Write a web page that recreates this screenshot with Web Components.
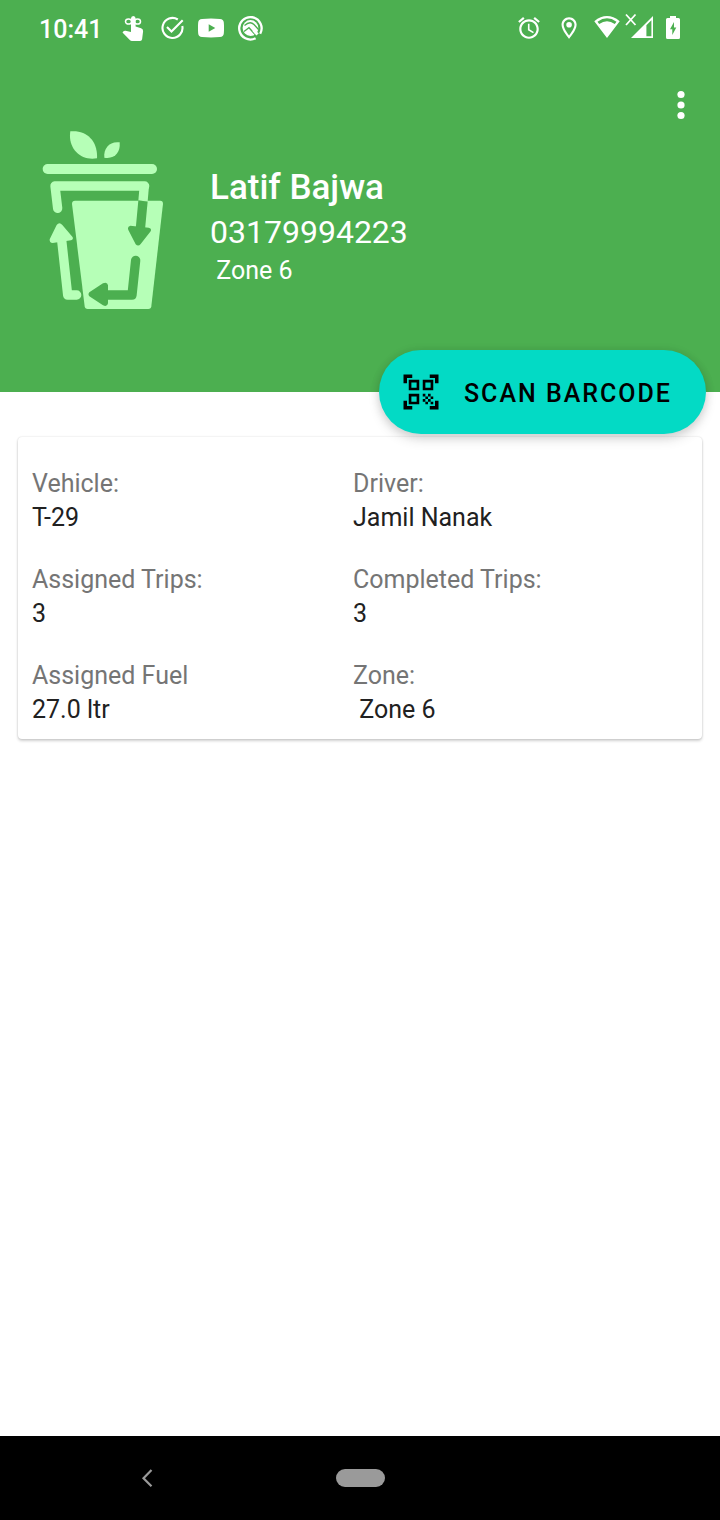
<!DOCTYPE html>
<html lang="en">
<head>
<meta charset="utf-8">
<meta name="viewport" content="width=device-width, initial-scale=1">
<title>Trips</title>
<style>
  body { margin: 0; font-family: Roboto, "Noto Sans", sans-serif; font-size: 25px; }
</style>
</head>
<body>
<driver-app></driver-app>
<script>
const define = (name, html) => {
  const template = document.createElement('template');
  template.innerHTML = html;
  customElements.define(name, class extends HTMLElement {
    constructor() {
      super();
      this.attachShadow({ mode: 'open' }).append(template.content.cloneNode(true));
    }
  });
};

define('status-bar', `
<style>
  :host { display: flex; justify-content: space-between; align-items: center; height: 56px; padding: 0 40px 0 39px; box-sizing: border-box; color: #fff; }
  .group { display: flex; align-items: center; }
  .left { gap: 14px; }
  .right { gap: 12px; }
  time { font-weight: 500; line-height: 30px; width: 68px; padding-top: 4px; }
  svg { display: block; fill: currentColor; }
</style>
<div class="group left">
  <time>10:41</time>
  <svg width="26" height="28" viewBox="0 0 26 28" aria-hidden="true">
    <path d="M10 4.500q0-2.500 2.300-2.500t2.300 2.500v8l5.500 1.800q2.300.8 2 3l-1 8q-.3 1.700-2 1.700H11q-1.300 0-2.200-1L1.500 18.500l1-1.200q.8-.9 2-.6l5.500 1.200z"/>
    <g fill="none" stroke="currentColor" stroke-width="1.500"><ellipse cx="7.500" cy="7.500" rx="3" ry="2.600"/><ellipse cx="16.500" cy="7.500" rx="3" ry="2.600"/></g>
  </svg>
  <svg width="23" height="28" viewBox="0 0 23 28" aria-hidden="true">
    <g fill="none" stroke="currentColor" stroke-width="2.100"><path d="M16.800 5.500A10 10 0 1 0 21.300 12"/><path d="M6 13l4.500 4.600L21.700 6.300"/></g>
  </svg>
  <svg width="26" height="28" viewBox="0 0 26 28" aria-hidden="true">
    <path fill-rule="evenodd" d="M4 5q9-.8 18 0 3.500.2 3.800 3.500.5 5.500 0 11-.3 3.300-3.800 3.500-9 .8-18 0-3.500-.2-3.800-3.500-.5-5.500 0-11Q.5 5.200 4 5zm6.700 5.200v7.600l6.600-3.800z"/>
  </svg>
  <svg width="25" height="28" viewBox="0 0 25 28" aria-hidden="true">
    <path fill="none" stroke="currentColor" stroke-width="2.300" d="M17.600 24.200A11.200 11.200 0 1 1 22.200 19.700"/>
    <circle cx="12.500" cy="14" r="7.900"/>
    <g fill="none" stroke="#4caf50" stroke-width="1.300"><path d="M6.500 11.500q5.500-5 9.500-1l4.500 5"/><path d="M6 17.500l5-3.800 6.500 7.300"/></g>
    <path d="M15.500 16l4 4.600" stroke="currentColor" stroke-width="3"/>
  </svg>
</div>
<div class="group right">
  <svg width="26" height="26" viewBox="0 0 24 24" aria-hidden="true"><path d="M22 5.720l-4.600-3.860-1.290 1.530 4.600 3.860L22 5.720zM7.880 3.390L6.600 1.860 2 5.710l1.290 1.530 4.590-3.850zM12.500 8H11v6l4.750 2.850.75-1.230-4-2.370V8zM12 4c-4.970 0-9 4.030-9 9s4.020 9 9 9c4.970 0 9-4.030 9-9s-4.030-9-9-9zm0 16c-3.870 0-7-3.130-7-7s3.130-7 7-7 7 3.130 7 7-3.130 7-7 7z"/></svg>
  <svg width="28" height="26" viewBox="-2 0 26 24" aria-hidden="true"><path d="M12 2C8.130 2 5 5.130 5 9c0 5.250 7 13 7 13s7-7.750 7-13c0-3.870-3.130-7-7-7zM7 9c0-2.760 2.240-5 5-5s5 2.240 5 5c0 2.880-2.880 7.190-5 9.880C9.920 16.210 7 11.850 7 9z"/><circle cx="12" cy="9" r="2.600"/></svg>
  <svg width="60" height="30" viewBox="0 0 60 30" aria-hidden="true">
    <path fill-rule="evenodd" d="M.3 8.200Q13-2 25.700 8.200L13 25zM3.500 8.700l1.700 2.300q7.800-5.600 15.600 0l1.700-2.300q-9.500-6.800-19 0z"/>
    <path d="M32 1.500l9.500 10.500m0-10.500l-9.500 10.500" stroke="currentColor" stroke-width="1.800"/>
    <path fill-rule="evenodd" d="M59 3v22H37zM57.400 7.200l-5 5v11h5z"/>
  </svg>
  <svg width="14" height="26" viewBox="0 0 14 26" aria-hidden="true"><path fill-rule="evenodd" d="M4 2V1h6v2h2.500q1.500 0 1.500 1.500v18q0 1.500-1.500 1.500h-11Q0 24 0 22.500v-18Q0 3 1.500 3H4zM8 7l-4 7.200h2.300V20l4-7.500H8z"/></svg>
</div>`);

define('bin-logo', `
<style>
  :host { display: block; color: #b6ffb7; --cut: #4caf50; }
  svg { display: block; fill: currentColor; }
</style>
<svg width="150" height="190" viewBox="0 33 450 570" role="img" aria-label="Recycling bin">
  <path d="M121 34C170 29 204 63 201 115C150 124 113 84 121 34z"/>
  <path d="M269 67C272 99 253 118 223 113C220 84 239 63 269 67z"/>
  <rect x="38" y="132" width="343" height="30" rx="15"/>
  <path d="M135 242H391Q399 242 399 251L364 559Q363 567 355 567H173Q165 567 164 559L126 251Q126 242 135 242z"/>
  <g fill="none" stroke="currentColor" stroke-width="28" stroke-linejoin="round">
    <path stroke-linecap="round" d="M83 265L75 198H344"/>
    <path d="M343 197L339 243"/>
    <path d="M95 360L113 525H140" stroke-linecap="round"/>
  </g>
  <path d="M80 315Q88 304 97 315L127 350Q132 357 123 361L68 369Q58 369 59 358z"/>
  <g fill="none" stroke="var(--cut)" stroke-width="28" stroke-linejoin="round">
    <path d="M339 243L331 328"/>
    <path stroke-linecap="round" d="M317 421L306 525H225"/>
  </g>
  <path fill="var(--cut)" d="M301 317L356 323Q366 325 362 334L332 372Q325 381 317 373L295 330Q291 320 301 317zM178 517L219 490Q232 484 234 496V550Q232 562 219 556L178 529Q173 523 178 517z"/>
</svg>`);

define('scan-button', `
<style>
  :host { display: block; }
  button { display: flex; align-items: center; gap: 22px; height: 84px; padding: 0 34px 0 21px; border: 0; border-radius: 42px; background: #03dac5; color: #000; font: 500 25px/34px Roboto, sans-serif; letter-spacing: 2px; text-transform: uppercase; white-space: nowrap; cursor: pointer; box-shadow: 0 6px 12px rgba(0,0,0,.12), 0 1px 10px rgba(0,0,0,.12); }
  svg { display: block; }
  span { padding-top: 4px; }
</style>
<button type="button">
  <svg width="42" height="42" viewBox="0 0 24 24" aria-hidden="true"><path d="M9.500,6.500v3h-3v-3H9.500 M11,5H5v6h6V5L11,5z M9.500,14.500v3h-3v-3H9.500 M11,13H5v6h6V13L11,13z M17.500,6.500v3h-3v-3H17.500 M19,5h-6v6h6V5L19,5z M13,13h1.500v1.500H13V13z M14.500,14.500H16V16h-1.500V14.500z M16,13h1.500v1.500H16V13z M13,16h1.500v1.500H13V16z M14.500,17.500H16V19h-1.500V17.500z M16,16h1.500v1.500H16V16z M17.500,14.500H19V16h-1.500V14.500z M17.500,17.500H19V19h-1.500V17.500z M22,7h-2V4h-3V2h5V7z M22,22v-5h-2v3h-3v2H22z M2,22h5v-2H4v-3H2V22z M2,2v5h2V4h3V2H2z"/></svg>
  <span><slot></slot></span>
</button>`);

define('profile-header', `
<style>
  :host { display: block; position: relative; background: #4caf50; color: #fff; padding-bottom: 21px; }
  .row { display: flex; align-items: center; gap: 30px; min-height: 290px; margin-top: 25px; padding: 0 14px 0 30px; }
  .who { flex: 1; min-width: 0; padding-top: 2px; }
  h1, p { margin: 0; font-weight: 400; }
  h1 { font-size: 35px; font-weight: 500; line-height: 46px; }
  .phone { font-size: 32px; line-height: 42px; }
  .zone { line-height: 36px; white-space: pre; }
  .menu { align-self: flex-start; display: grid; place-items: center; width: 50px; height: 48px; padding: 0; border: 0; background: none; color: inherit; cursor: pointer; }
  svg { display: block; fill: currentColor; }
  scan-button { position: absolute; right: 14px; bottom: -42px; }
</style>
<status-bar></status-bar>
<div class="row">
  <bin-logo></bin-logo>
  <div class="who">
    <h1><slot name="name"></slot></h1>
    <p class="phone"><slot name="phone"></slot></p>
    <p class="zone"><slot name="zone"></slot></p>
  </div>
  <button class="menu" type="button" aria-label="More options">
    <svg width="8" height="30" viewBox="0 0 8 30"><circle cx="4" cy="4.500" r="3.600"/><circle cx="4" cy="15" r="3.600"/><circle cx="4" cy="25.500" r="3.600"/></svg>
  </button>
</div>
<scan-button>Scan Barcode</scan-button>`);

define('info-field', `
<style>
  :host { display: block; line-height: 34px; }
  .label { color: #757575; }
  .value { color: #212121; white-space: pre; }
</style>
<div class="label"><slot name="label"></slot></div>
<div class="value"><slot></slot></div>`);

define('info-card', `
<style>
  :host { display: grid; grid-template-columns: 1fr 1fr; row-gap: 28px; margin: 45px 18px 0; padding: 30px 28px 12px 14px; border-radius: 4px; background: #fff; box-shadow: 0 2px 3px rgba(0,0,0,.18), 0 0 2px rgba(0,0,0,.16); }
</style>
<slot></slot>`);

define('nav-bar', `
<style>
  :host { display: grid; grid-template-columns: 1fr 49px 1fr; align-items: center; height: 84px; background: #000; color: #9a9a9a; }
  button { display: grid; place-items: center; height: 84px; padding: 0; border: 0; background: none; color: inherit; cursor: pointer; }
  .back { width: 84px; margin-left: 105px; }
  .home::before { content: ""; width: 49px; height: 18px; border-radius: 9px; background: currentColor; }
  svg { display: block; }
</style>
<button class="back" type="button" aria-label="Back"><svg width="12" height="20" viewBox="0 0 12 20" fill="none" stroke="currentColor" stroke-width="2.200"><path d="M10.500 2L2.500 10.300l8 8"/></svg></button>
<button class="home" type="button" aria-label="Home"></button>`);

define('driver-app', `
<style>
  :host { display: flex; flex-direction: column; min-height: 100vh; background: #fff; }
  main { flex: 1; }
  profile-header { z-index: 1; }
</style>
<profile-header>
  <span slot="name">Latif Bajwa</span>
  <span slot="phone">03179994223</span>
  <span slot="zone"> Zone 6</span>
</profile-header>
<main>
  <info-card>
    <info-field><span slot="label">Vehicle:</span>T-29</info-field>
    <info-field><span slot="label">Driver:</span>Jamil Nanak</info-field>
    <info-field><span slot="label">Assigned Trips:</span>3</info-field>
    <info-field><span slot="label">Completed Trips:</span>3</info-field>
    <info-field><span slot="label">Assigned Fuel</span>27.0 ltr</info-field>
    <info-field><span slot="label">Zone:</span> Zone 6</info-field>
  </info-card>
</main>
<nav-bar></nav-bar>`);
</script>
</body>
</html>
